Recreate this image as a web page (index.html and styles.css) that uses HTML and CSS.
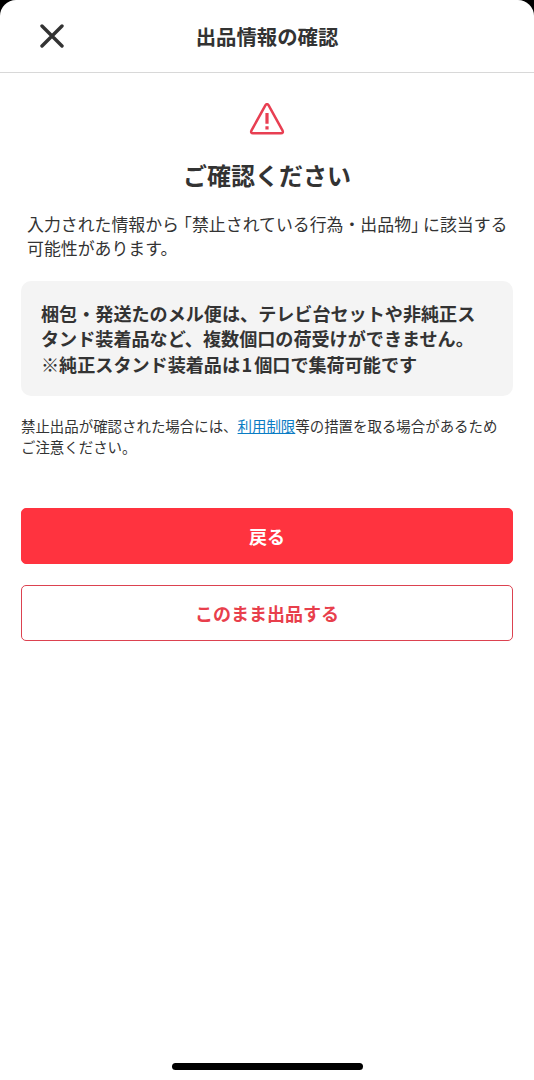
FILE: index.html
```html
<!DOCTYPE html>
<html lang="ja">
<head>
  <meta charset="UTF-8" />
  <meta name="viewport" content="width=device-width, initial-scale=1.0" />
  <title>出品情報の確認</title>
  <link rel="stylesheet" href="styles.css">
</head>
<body>
  <div class="screen">
    <header class="header">
      <button class="close-btn" aria-label="閉じる">
        <svg width="24" height="24" viewBox="0 0 24 24" fill="none" stroke="#333" stroke-width="3.4" stroke-linecap="round">
          <path d="M2 2L22 22M22 2L2 22" />
        </svg>
      </button>
      <h1>出品情報の確認</h1>
    </header>

    <main>
      <svg class="alert-icon" width="36" height="32" viewBox="0 0 36 32" fill="none" stroke="#e83f52" stroke-width="2.5">
        <path d="M16.5 2.2Q18 0 19.5 2.2L33.6 27.6Q34.6 30.2 32 30.2H4Q1.4 30.2 2.4 27.6Z" stroke-linejoin="round" />
        <path d="M18 10V20.8M18 23.2V26.4" stroke-width="3.2" />
      </svg>
      <h2>ご確認ください</h2>
      <p class="lead">入力された情報から<span class="open">「</span>禁止されている行為・出品物<span class="close">」</span>に該当する<br>可能性があります。</p>

      <div class="notice">梱包・発送たのメル便は、テレビ台セットや非純正ス<br>タンド装着品など、複数個口の荷受けができません。<br>※純正スタンド装着品は<span class="num">1</span>個口で集荷可能です</div>

      <p class="caution">禁止出品が確認された場合には、<a href="#">利用制限</a>等の措置を取る場合があるため<br>ご注意ください。</p>

      <div class="buttons">
        <button class="btn primary">戻る</button>
        <button class="btn outline">このまま出品する</button>
      </div>
    </main>

    <div class="home-bar"></div>
  </div>
</body>
</html>
```

FILE: styles.css
```css
* {
  box-sizing: border-box;
}

body {
  margin: 0;
  background-color: #000;
  color: #333;
  font-family: "Noto Sans CJK JP", sans-serif;
}

.screen {
  display: flex;
  flex-direction: column;
  height: 1080px;
  background-color: #fff;
  border-radius: 16px 16px 0 0;
}

.header {
  display: grid;
  grid-template-columns: 64px 1fr 64px;
  align-items: center;
  height: 73px;
  border-bottom: 1px solid #d8d8d8;
}

.close-btn {
  display: flex;
  justify-content: flex-end;
  padding: 0;
  border: none;
  background: none;
}

h1 {
  margin: 0 0 1px;
  font-size: 20.4px;
  line-height: 30px;
  text-align: center;
}

main {
  flex: 1;
  padding: 30px 21px 0;
}

.alert-icon {
  display: block;
  margin: 0 auto;
}

h2 {
  margin: 22px 0 0;
  font-size: 24px;
  line-height: 36px;
  text-align: center;
}

.lead {
  margin: 19px 6px 0;
  font-size: 16.9px;
  line-height: 24px;
  white-space: nowrap;
}

/* half-width brackets */
.open,
.close {
  font-feature-settings: "halt";
}

.open {
  padding-left: 4.5px;
}

.close {
  padding-right: 3.5px;
}

.notice {
  height: 115px;
  margin-top: 21px;
  padding: 20px;
  background-color: #f4f4f4;
  border-radius: 10px;
  font-size: 18.1px;
  font-weight: bold;
  line-height: 25.3px;
  white-space: nowrap;
}

.num {
  padding: 0 2px 0 1.5px;
}

.caution {
  margin: 20px 0 0;
  font-size: 14.45px;
  line-height: 20.5px;
  white-space: nowrap;
}

.caution a {
  color: #0a7cc4;
}

.buttons {
  display: grid;
  gap: 21px;
  margin-top: 51px;
}

.btn {
  height: 56px;
  padding: 0;
  border: 1px solid #ff333f;
  border-radius: 5px;
  font-family: inherit;
  font-size: 18px;
  font-weight: bold;
}

.primary {
  background-color: #ff333f;
  color: #fff;
}

.outline {
  background-color: #fff;
  border-color: #dc4250;
  color: #e83f4c;
}

.home-bar {
  width: 191px;
  height: 7px;
  margin: 0 auto 10px;
  background-color: #000;
  border-radius: 4px;
}
```
